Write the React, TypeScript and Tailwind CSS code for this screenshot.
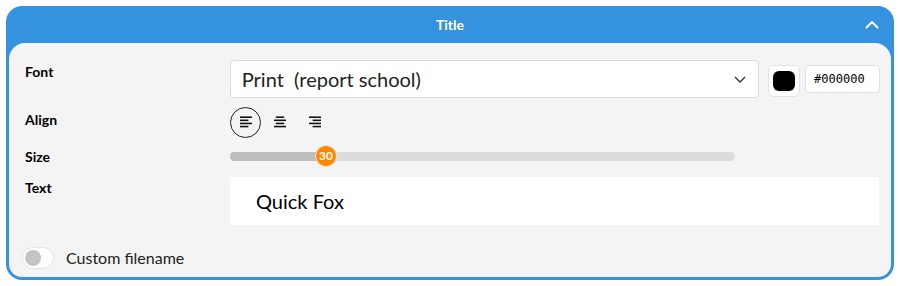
import React from "react";

function AlignIcon({ kind }: { kind: "left" | "center" | "right" }) {
  const lines =
    kind === "left"
      ? [[0, 10], [0, 7], [0, 10], [0, 7]]
      : kind === "center"
      ? [[1.5, 8.5], [0, 10], [1.5, 8.5], [0, 10]]
      : [[0, 10], [3, 10], [0, 10], [3, 10]];
  return (
    <svg width="12" height="12" viewBox="0 0 10 10" fill="none">
      {lines.map(([a, b], i) => (
        <line key={i} x1={a} x2={b} y1={1 + i * 2.6} y2={1 + i * 2.6} stroke="#111" strokeWidth="1.3" />
      ))}
    </svg>
  );
}

export default function App() {
  const font = { fontFamily: "Lato, 'Open Sans', sans-serif" };
  return (
    <div className="w-[900px] h-[286px] bg-white pt-[6px] pl-[6px]" style={font}>
      <div className="w-[888px] h-[274px] bg-[#3592de] rounded-[16px] p-[3px] pt-0 flex flex-col">
        <div className="h-[37px] flex items-center justify-center relative">
          <span className="text-white font-bold text-[14px]">Title</span>
          <svg className="absolute right-[12px] top-[14px]" width="14" height="9" viewBox="0 0 14 9" fill="none">
            <path d="M1.5 7.5 L7 2 L12.5 7.5" stroke="white" strokeWidth="2" strokeLinecap="round" strokeLinejoin="round" />
          </svg>
        </div>
        <div className="flex-1 bg-[#f4f4f4] rounded-t-[16px] rounded-b-[13px] pl-[16px] pr-[11px] pt-[17px] flex flex-col">
          <div className="flex items-start">
            <div className="w-[205px] pt-[1px] text-[14px] font-bold text-black">Font</div>
            <div className="w-[530px] h-[38px] bg-white border border-[#d9d9de] rounded-[4px] flex items-center justify-between pl-[11px] pr-[12px]">
              <span className="text-[20px] text-[#222]">Print&nbsp; (report school)</span>
              <svg width="12" height="7" viewBox="0 0 12 7" fill="none">
                <path d="M1 1 L6 6 L11 1" stroke="#333" strokeWidth="1.4" />
              </svg>
            </div>
            <div className="ml-[9px] mt-[5px] w-[32px] h-[32px] bg-white border border-[#e2e2e6] rounded-[6px] flex items-center justify-center">
              <div className="w-[22px] h-[20px] bg-black rounded-[6px]" />
            </div>
            <div className="ml-[5px] mt-[5px] w-[75px] h-[28px] bg-white border border-[#e2e2e6] rounded-[4px] flex items-center pl-[8px] text-[12px] text-black" style={{ fontFamily: "'DejaVu Sans Mono', monospace" }}>
              #000000
            </div>
          </div>
          <div className="flex items-center mt-[8px] h-[32px]">
            <div className="w-[205px] text-[14px] font-bold text-black -mt-[6px]">Align</div>
            <div className="w-[31px] h-[31px] rounded-full border border-[#222] flex items-center justify-center">
              <AlignIcon kind="left" />
            </div>
            <div className="ml-[13px] w-[12px] flex items-center justify-center">
              <AlignIcon kind="center" />
            </div>
            <div className="ml-[23px] w-[12px] flex items-center justify-center">
              <AlignIcon kind="right" />
            </div>
          </div>
          <div className="flex items-center mt-[7px] h-[22px]">
            <div className="w-[205px] text-[14px] font-bold text-black">Size</div>
            <div className="relative w-[505px] h-[9px] bg-[#dcdcdc] rounded-full">
              <div className="absolute left-0 top-0 h-[9px] w-[96px] bg-[#bdbdbd] rounded-l-full" />
              <div className="absolute left-[85px] top-[-7px] w-[22px] h-[22px] rounded-full bg-[#ff8800] border border-[#e8e8e8] flex items-center justify-center text-white text-[12px] font-bold">
                30
              </div>
            </div>
          </div>
          <div className="flex items-start mt-[10px]">
            <div className="w-[205px] pt-0 text-[14px] font-bold text-black">Text</div>
            <div className="w-[649px] h-[48px] bg-white flex items-center pl-[26px] text-[20px] text-black">Quick Fox</div>
          </div>
          <div className="flex items-center mt-[21px] -ml-[3px]">
            <div className="w-[32px] h-[22px] rounded-full bg-white border border-[#e2e4ea] flex items-center pl-[2px]">
              <div className="w-[16px] h-[16px] rounded-full bg-[#c4c4c4]" />
            </div>
            <span className="ml-[12px] text-[16px] text-[#222]">Custom filename</span>
          </div>
        </div>
      </div>
    </div>
  );
}
